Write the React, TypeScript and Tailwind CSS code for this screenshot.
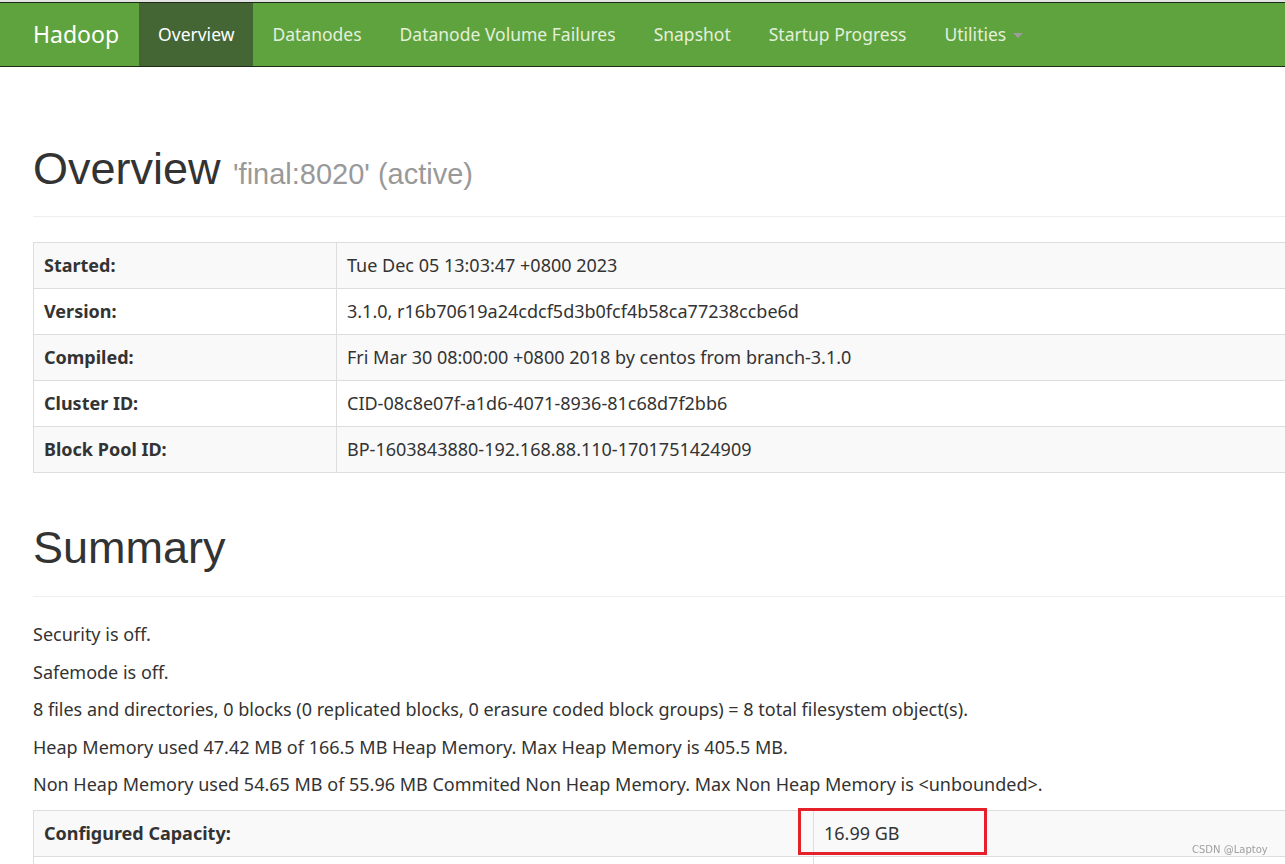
import React from 'react';

const navItems = ['Overview', 'Datanodes', 'Datanode Volume Failures', 'Snapshot', 'Startup Progress'];

const overviewRows: [string, string][] = [
    ['Started:', 'Tue Dec 05 13:03:47 +0800 2023'],
    ['Version:', '3.1.0, r16b70619a24cdcf5d3b0fcf4b58ca77238ccbe6d'],
    ['Compiled:', 'Fri Mar 30 08:00:00 +0800 2018 by centos from branch-3.1.0'],
    ['Cluster ID:', 'CID-08c8e07f-a1d6-4071-8936-81c68d7f2bb6'],
    ['Block Pool ID:', 'BP-1603843880-192.168.88.110-1701751424909'],
];

const summaryLines = [
    'Security is off.',
    'Safemode is off.',
    '8 files and directories, 0 blocks (0 replicated blocks, 0 erasure coded block groups) = 8 total filesystem object(s).',
    'Heap Memory used 47.42 MB of 166.5 MB Heap Memory. Max Heap Memory is 405.5 MB.',
    'Non Heap Memory used 54.65 MB of 55.96 MB Commited Non Heap Memory. Max Non Heap Memory is <unbounded>.',
];

const bodyFont = "font-['Noto_Sans',sans-serif]";
const headFont = "font-['Liberation_Sans',Arial,sans-serif]";

export default function App() {
    return (
        <div className={`h-[864px] overflow-hidden bg-white text-[#333] ${bodyFont}`}>
            {/* Navbar */}
            <div className="border-t-2 border-[#e3e3e3]">
                <nav className="flex h-[65px] items-stretch border-y border-[#1e2a18] bg-[#5fa33e] pl-[13px]">
                    <div className="flex items-center px-5 text-[23px] text-white">Hadoop</div>
                    {navItems.map((item, i) => (
                        <div
                            key={item}
                            className={
                                i === 0
                                    ? 'flex items-center bg-[#446634] px-[19px] text-[17.5px] text-white'
                                    : 'flex items-center px-[19px] text-[17.5px] text-[#e4efdc]'
                            }
                        >
                            {item}
                        </div>
                    ))}
                    <div className="flex items-center gap-[7px] px-[19px] text-[17.5px] text-[#e4efdc]">
                        Utilities
                        <span className="mt-[2px] h-0 w-0 border-x-[5px] border-t-[5px] border-x-transparent border-t-[#9c9c9c]" />
                    </div>
                </nav>
            </div>

            <div className="w-[1320px] pl-[33px]">
                {/* Overview */}
                <div className="mt-[75px] border-b border-[#eee] pb-[15px]">
                    <h1 className={`${headFont} text-[45px] leading-[54px] text-[#333]`}>
                        Overview <span className="text-[29px] text-[#999]">'final:8020' (active)</span>
                    </h1>
                </div>

                <table className="mt-[25px] w-full border-collapse border border-[#ddd] text-[18px]">
                    <tbody>
                        {overviewRows.map(([k, v], i) => (
                            <tr key={k} className={i % 2 === 0 ? 'bg-[#f9f9f9]' : 'bg-white'}>
                                <th className="w-[303px] border border-[#ddd] px-[10px] py-[10px] text-left font-bold leading-[25px]">{k}</th>
                                <td className="border border-[#ddd] px-[10px] py-[10px] leading-[25px]">{v}</td>
                            </tr>
                        ))}
                    </tbody>
                </table>

                {/* Summary */}
                <div className="mt-[48px] border-b border-[#eee] pb-[21px]">
                    <h1 className={`${headFont} text-[45px] leading-[54px] text-[#333]`}>Summary</h1>
                </div>

                <div className="mt-[25px] text-[18px] leading-[25px]">
                    {summaryLines.map((line) => (
                        <p key={line} className="mb-[12.5px]">{line}</p>
                    ))}
                </div>

                <div className="relative">
                    <table className="w-full border-collapse border border-[#ddd] text-[18px]">
                        <tbody>
                            <tr className="bg-[#f9f9f9]">
                                <th className="w-[780px] border border-[#ddd] px-[10px] py-[10px] text-left font-bold leading-[25px]">Configured Capacity:</th>
                                <td className="border border-[#ddd] px-[10px] py-[10px] leading-[25px]">16.99 GB</td>
                            </tr>
                            <tr>
                                <th className="border border-[#ddd] px-[10px] py-[10px] text-left font-bold leading-[25px]">&nbsp;</th>
                                <td className="border border-[#ddd] px-[10px] py-[10px] leading-[25px]">&nbsp;</td>
                            </tr>
                        </tbody>
                    </table>
                    {/* highlight box */}
                    <div className="absolute left-[765px] top-[-2px] h-[47px] w-[189px] border-[3px] border-[#e5202a]" />
                </div>
            </div>

            {/* watermark */}
            <div className="fixed left-[1192px] top-[842px] font-['DejaVu_Sans',sans-serif] text-[10px] text-[#a0a0a0]">CSDN @Laptoy</div>
        </div>
    );
}
